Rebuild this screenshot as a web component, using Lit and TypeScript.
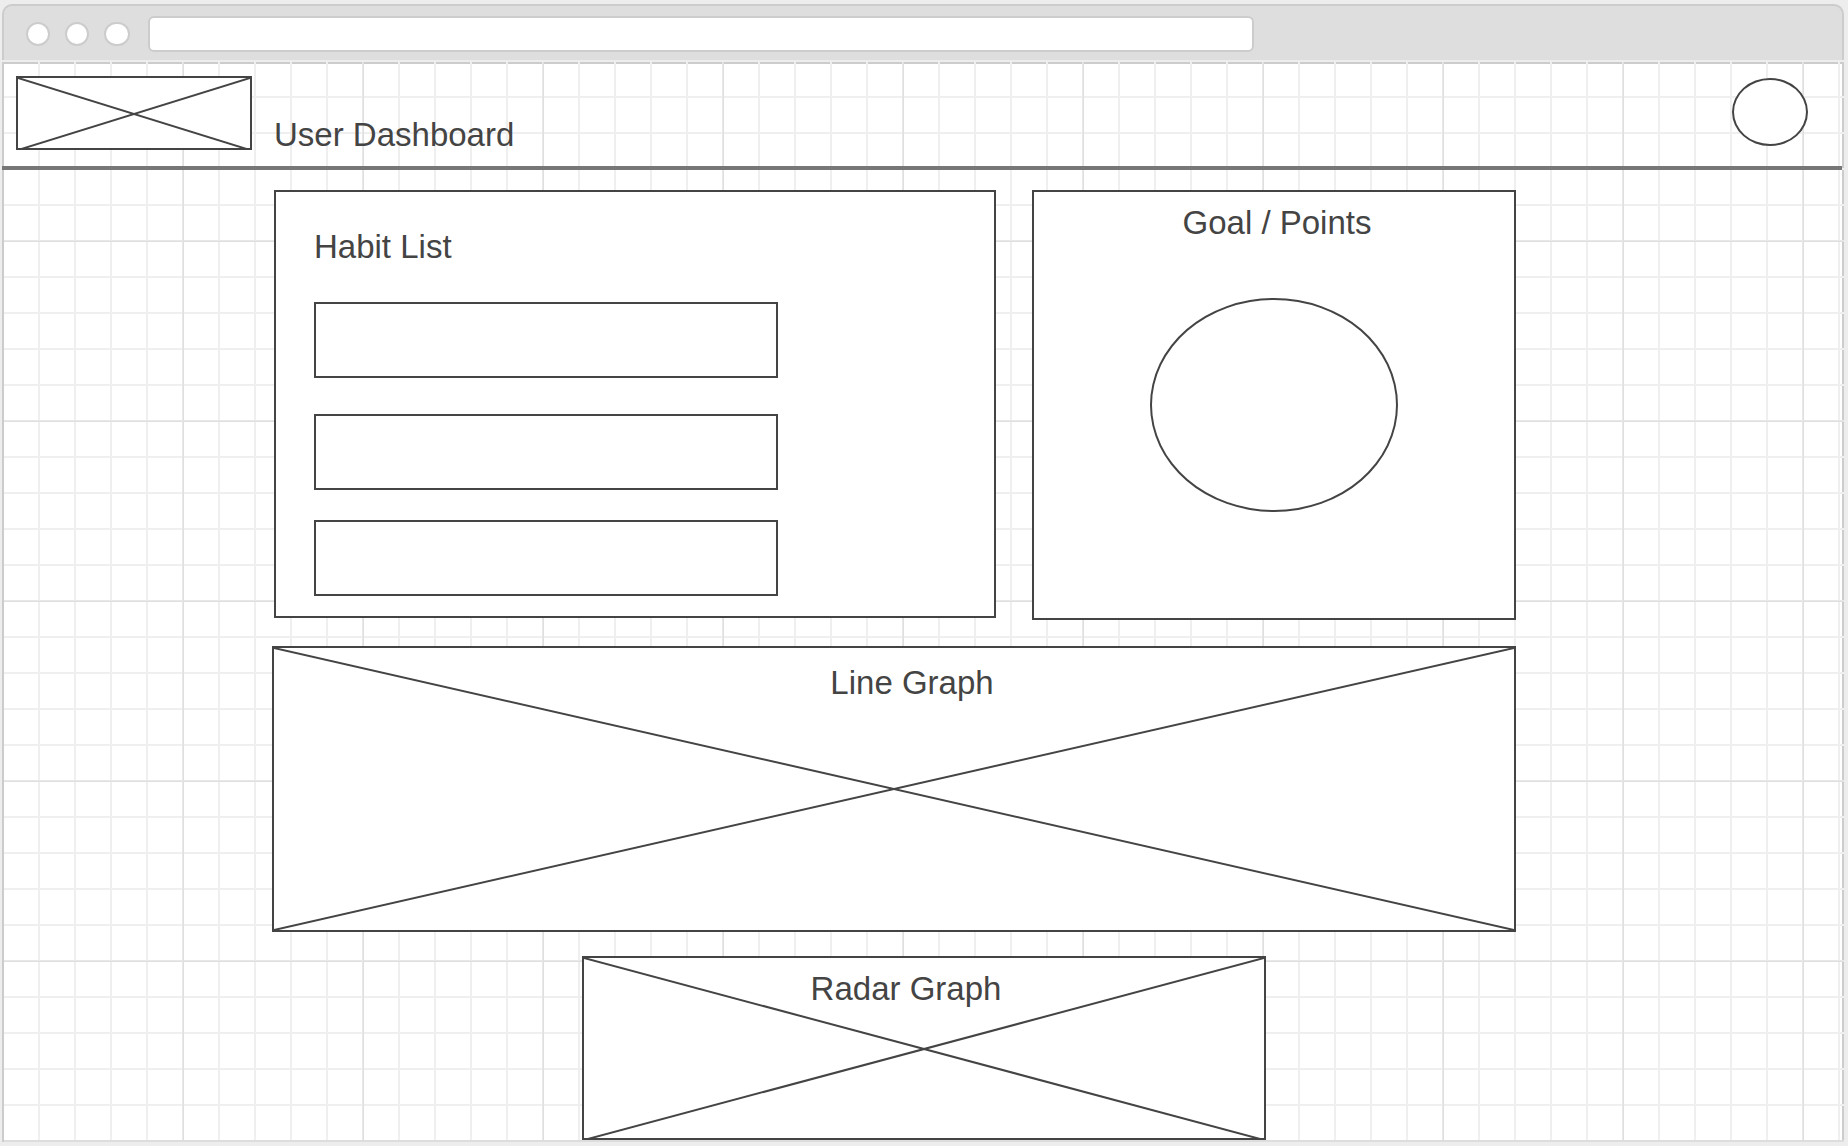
import { LitElement, html, css } from "lit";
import { customElement } from "lit/decorators.js";

const cross = html`
  <svg class="cross" aria-hidden="true">
    <line x1="0" y1="0" x2="100%" y2="100%"></line>
    <line x1="100%" y1="0" x2="0" y2="100%"></line>
  </svg>
`;

@customElement("app-root")
export class AppRoot extends LitElement {
  static styles = css`
    :host {
      --ink: #444444;
      --edge: #cccccc;
      --page: #ededed;
      --minor: #efefef;
      display: flex;
      flex-direction: column;
      gap: 2px;
      box-sizing: border-box;
      min-height: 100vh;
      padding: 4px 4px 4px 2px;
      background: var(--page);
      color: var(--ink);
      font-family: "Liberation Sans", Arial, sans-serif;
      font-size: 33px;
      line-height: 34px;
    }

    * {
      box-sizing: border-box;
    }

    h1,
    h2 {
      margin: 0;
      font-size: inherit;
      font-weight: 400;
    }

    /* Browser bar */
    .chrome {
      display: flex;
      align-items: center;
      padding: 10px 22px 8px;
      border: 2px solid var(--edge);
      border-bottom: 0;
      border-radius: 10px 10px 0 0;
      background: #dedede;
    }

    .dots {
      display: flex;
      flex: none;
      gap: 15px;
      margin-right: 18px;
    }

    .dot {
      width: 24px;
      height: 24px;
      border: 2px solid var(--edge);
      border-radius: 50%;
      background: #ffffff;
    }

    .dot.wide {
      width: 26px;
      border-radius: 12px;
    }

    .address {
      flex: 0 1 1106px;
      min-width: 0;
      height: 36px;
      padding: 0 12px;
      border: 2px solid var(--edge);
      border-radius: 6px;
      background: #ffffff;
      color: var(--ink);
      font: 18px "Liberation Sans", Arial, sans-serif;
      outline: none;
    }

    /* Grid paper: frame edges, then five-cell lines, then single-cell lines */
    .canvas {
      flex: 1;
      padding: 2px 2px 2px 0;
      background:
        linear-gradient(var(--edge), var(--edge)) 0 0 / 2px 100% no-repeat,
        linear-gradient(#dddddd, #dddddd) 0 100% / 100% 2px no-repeat,
        linear-gradient(90deg, #e8e8e8 1px, #dfdfdf 1px 2px, transparent 2px) 0 0 / 180px 100%,
        linear-gradient(#e8e8e8 1px, #dfdfdf 1px 2px, transparent 2px) 0 -2px / 100% 180px,
        linear-gradient(90deg, var(--minor) 2px, transparent 2px) 0 0 / 36px 100%,
        linear-gradient(var(--minor) 2px, transparent 2px) 0 -2px / 100% 36px,
        linear-gradient(var(--edge), var(--edge)) 0 0 / 100% 2px no-repeat,
        linear-gradient(var(--edge), var(--edge)) 100% 0 / 2px 100% no-repeat,
        #ffffff;
    }

    .topbar {
      display: flex;
      align-items: flex-start;
      gap: 22px;
      padding: 12px 34px 14px 14px;
      border-bottom: 4px solid #777777;
    }

    .topbar h1 {
      flex: 1;
      padding-top: 42px;
    }

    .box {
      position: relative;
      border: 2px solid var(--ink);
      background: #ffffff;
    }

    .cross {
      position: absolute;
      inset: 0;
      width: 100%;
      height: 100%;
      stroke: var(--ink);
      stroke-width: 2;
    }

    /* The diagonals of the smaller boxes run into the bottom border */
    .logo .cross,
    .radar .cross {
      height: calc(100% + 2px);
    }

    .logo {
      flex: none;
      width: 236px;
      height: 74px;
    }

    .round {
      flex: none;
      border: 2px solid var(--ink);
      border-radius: 50%;
      background: #ffffff;
    }

    .avatar {
      width: 76px;
      height: 68px;
      margin: 2px 0 0;
      padding: 0;
    }

    .board {
      display: grid;
      grid-template-columns: 270fr minmax(0, 1244fr) 326fr;
      padding-top: 20px;
    }

    .panels {
      grid-column: 2;
    }

    .cards {
      display: grid;
      grid-template-columns: minmax(0, 722fr) minmax(0, 484fr);
      align-items: start;
      column-gap: 36px;
      padding-left: 2px;
    }

    .habits {
      padding: 38px 38px 20px;
    }

    .list {
      max-width: 464px;
      margin: 38px 0 0;
      padding: 0;
      list-style: none;
    }

    .habit {
      height: 76px;
      margin-bottom: 36px;
    }

    .habit:nth-child(2) {
      margin-bottom: 30px;
    }

    .habit:last-child {
      margin-bottom: 0;
    }

    .goal {
      display: flex;
      flex-direction: column;
      align-items: center;
      gap: 58px;
      padding: 14px 0 106px;
    }

    .goal h2 {
      padding-left: 6px;
    }

    .meter {
      width: 248px;
      height: 214px;
    }

    .graph {
      text-align: center;
    }

    .graph h2 {
      position: relative;
    }

    .line {
      min-height: 286px;
      margin-top: 26px;
      padding: 18px 0 0 36px;
    }

    .radar-row {
      display: grid;
      grid-template-columns: 310fr minmax(0, 684fr) 250fr;
      margin-top: 24px;
    }

    .radar {
      grid-column: 2;
      min-height: 184px;
      padding: 14px 36px 0 0;
    }
  `;

  render() {
    return html`
      <div class="chrome">
        <div class="dots">
          <span class="dot"></span>
          <span class="dot"></span>
          <span class="dot wide"></span>
        </div>
        <input class="address" type="text" aria-label="Address" />
      </div>
      <div class="canvas">
        <header class="topbar">
          <div class="box logo">${cross}</div>
          <h1>User Dashboard</h1>
          <button class="round avatar" type="button" aria-label="Account"></button>
        </header>
        <main class="board">
          <div class="panels">
            <div class="cards">
              <section class="box habits">
                <h2>Habit List</h2>
                <ul class="list">
                  ${[0, 1, 2].map(() => html`<li class="box habit"></li>`)}
                </ul>
              </section>
              <section class="box goal">
                <h2>Goal / Points</h2>
                <div class="round meter"></div>
              </section>
            </div>
            <section class="box graph line">
              ${cross}
              <h2>Line Graph</h2>
            </section>
            <div class="radar-row">
              <section class="box graph radar">
                ${cross}
                <h2>Radar Graph</h2>
              </section>
            </div>
          </div>
        </main>
      </div>
    `;
  }
}
